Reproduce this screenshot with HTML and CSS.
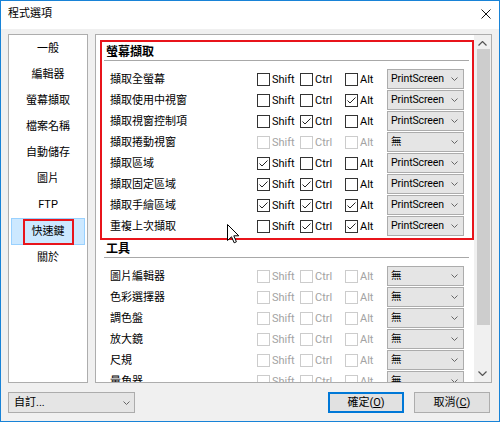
FILE: index.html
```html
<!DOCTYPE html>
<html lang="zh-Hant">
<head>
<meta charset="utf-8">
<title>程式選項</title>
<link rel="stylesheet" href="styles.css">
</head>
<body>
<div class="window">
  <div class="titlebar">
    <span class="title">程式選項</span>
    <svg class="close" width="10" height="10" viewBox="0 0 10 10"><path d="M0.5 0.5 L9.5 9.5 M9.5 0.5 L0.5 9.5" stroke="#111" stroke-width="1" fill="none"/></svg>
  </div>
  <div class="content">
    <div class="main">
      <ul class="nav">
        <li>一般</li>
        <li>編輯器</li>
        <li>螢幕擷取</li>
        <li>檔案名稱</li>
        <li>自動儲存</li>
        <li>圖片</li>
        <li>FTP</li>
        <li class="active">快速鍵</li>
        <li>關於</li>
      </ul>
      <div class="panel">
        <div class="scroll">
          <section class="group">
            <h2>螢幕擷取</h2>
            <div class="row"><span class="label">擷取全螢幕</span>
              <span class="key"><span class="box"></span>Shift</span>
              <span class="key"><span class="box"></span>Ctrl</span>
              <span class="key"><span class="box"></span>Alt</span>
              <span class="dd"><span class="val">PrintScreen</span><svg width="7" height="4" viewBox="0 0 7 4"><path d="M0.5 0.5 L3.5 3.5 L6.5 0.5" fill="none" stroke="#666"/></svg></span>
            </div>
            <div class="row"><span class="label">擷取使用中視窗</span>
              <span class="key"><span class="box"></span>Shift</span>
              <span class="key"><span class="box"></span>Ctrl</span>
              <span class="key"><span class="box"><svg width="11" height="11" viewBox="0 0 11 11"><path d="M1.5 5.5 L4 8 L9.5 2.5" fill="none" stroke="#222"/></svg></span>Alt</span>
              <span class="dd"><span class="val">PrintScreen</span><svg width="7" height="4" viewBox="0 0 7 4"><path d="M0.5 0.5 L3.5 3.5 L6.5 0.5" fill="none" stroke="#666"/></svg></span>
            </div>
            <div class="row"><span class="label">擷取視窗控制項</span>
              <span class="key"><span class="box"></span>Shift</span>
              <span class="key"><span class="box"><svg width="11" height="11" viewBox="0 0 11 11"><path d="M1.5 5.5 L4 8 L9.5 2.5" fill="none" stroke="#222"/></svg></span>Ctrl</span>
              <span class="key"><span class="box"></span>Alt</span>
              <span class="dd"><span class="val">PrintScreen</span><svg width="7" height="4" viewBox="0 0 7 4"><path d="M0.5 0.5 L3.5 3.5 L6.5 0.5" fill="none" stroke="#666"/></svg></span>
            </div>
            <div class="row"><span class="label">擷取捲動視窗</span>
              <span class="key off"><span class="box"></span>Shift</span>
              <span class="key off"><span class="box"></span>Ctrl</span>
              <span class="key off"><span class="box"></span>Alt</span>
              <span class="dd"><span class="val">無</span><svg width="7" height="4" viewBox="0 0 7 4"><path d="M0.5 0.5 L3.5 3.5 L6.5 0.5" fill="none" stroke="#666"/></svg></span>
            </div>
            <div class="row"><span class="label">擷取區域</span>
              <span class="key"><span class="box"><svg width="11" height="11" viewBox="0 0 11 11"><path d="M1.5 5.5 L4 8 L9.5 2.5" fill="none" stroke="#222"/></svg></span>Shift</span>
              <span class="key"><span class="box"></span>Ctrl</span>
              <span class="key"><span class="box"></span>Alt</span>
              <span class="dd"><span class="val">PrintScreen</span><svg width="7" height="4" viewBox="0 0 7 4"><path d="M0.5 0.5 L3.5 3.5 L6.5 0.5" fill="none" stroke="#666"/></svg></span>
            </div>
            <div class="row"><span class="label">擷取固定區域</span>
              <span class="key"><span class="box"><svg width="11" height="11" viewBox="0 0 11 11"><path d="M1.5 5.5 L4 8 L9.5 2.5" fill="none" stroke="#222"/></svg></span>Shift</span>
              <span class="key"><span class="box"><svg width="11" height="11" viewBox="0 0 11 11"><path d="M1.5 5.5 L4 8 L9.5 2.5" fill="none" stroke="#222"/></svg></span>Ctrl</span>
              <span class="key"><span class="box"></span>Alt</span>
              <span class="dd"><span class="val">PrintScreen</span><svg width="7" height="4" viewBox="0 0 7 4"><path d="M0.5 0.5 L3.5 3.5 L6.5 0.5" fill="none" stroke="#666"/></svg></span>
            </div>
            <div class="row"><span class="label">擷取手繪區域</span>
              <span class="key"><span class="box"><svg width="11" height="11" viewBox="0 0 11 11"><path d="M1.5 5.5 L4 8 L9.5 2.5" fill="none" stroke="#222"/></svg></span>Shift</span>
              <span class="key"><span class="box"><svg width="11" height="11" viewBox="0 0 11 11"><path d="M1.5 5.5 L4 8 L9.5 2.5" fill="none" stroke="#222"/></svg></span>Ctrl</span>
              <span class="key"><span class="box"><svg width="11" height="11" viewBox="0 0 11 11"><path d="M1.5 5.5 L4 8 L9.5 2.5" fill="none" stroke="#222"/></svg></span>Alt</span>
              <span class="dd"><span class="val">PrintScreen</span><svg width="7" height="4" viewBox="0 0 7 4"><path d="M0.5 0.5 L3.5 3.5 L6.5 0.5" fill="none" stroke="#666"/></svg></span>
            </div>
            <div class="row"><span class="label">重複上次擷取</span>
              <span class="key"><span class="box"></span>Shift</span>
              <span class="key"><span class="box"><svg width="11" height="11" viewBox="0 0 11 11"><path d="M1.5 5.5 L4 8 L9.5 2.5" fill="none" stroke="#222"/></svg></span>Ctrl</span>
              <span class="key"><span class="box"><svg width="11" height="11" viewBox="0 0 11 11"><path d="M1.5 5.5 L4 8 L9.5 2.5" fill="none" stroke="#222"/></svg></span>Alt</span>
              <span class="dd"><span class="val">PrintScreen</span><svg width="7" height="4" viewBox="0 0 7 4"><path d="M0.5 0.5 L3.5 3.5 L6.5 0.5" fill="none" stroke="#666"/></svg></span>
            </div>
          </section>
          <section class="group tools">
            <h2>工具</h2>
            <div class="row"><span class="label">圖片編輯器</span>
              <span class="key off"><span class="box"></span>Shift</span>
              <span class="key off"><span class="box"></span>Ctrl</span>
              <span class="key off"><span class="box"></span>Alt</span>
              <span class="dd"><span class="val">無</span><svg width="7" height="4" viewBox="0 0 7 4"><path d="M0.5 0.5 L3.5 3.5 L6.5 0.5" fill="none" stroke="#666"/></svg></span>
            </div>
            <div class="row"><span class="label">色彩選擇器</span>
              <span class="key off"><span class="box"></span>Shift</span>
              <span class="key off"><span class="box"></span>Ctrl</span>
              <span class="key off"><span class="box"></span>Alt</span>
              <span class="dd"><span class="val">無</span><svg width="7" height="4" viewBox="0 0 7 4"><path d="M0.5 0.5 L3.5 3.5 L6.5 0.5" fill="none" stroke="#666"/></svg></span>
            </div>
            <div class="row"><span class="label">調色盤</span>
              <span class="key off"><span class="box"></span>Shift</span>
              <span class="key off"><span class="box"></span>Ctrl</span>
              <span class="key off"><span class="box"></span>Alt</span>
              <span class="dd"><span class="val">無</span><svg width="7" height="4" viewBox="0 0 7 4"><path d="M0.5 0.5 L3.5 3.5 L6.5 0.5" fill="none" stroke="#666"/></svg></span>
            </div>
            <div class="row"><span class="label">放大鏡</span>
              <span class="key off"><span class="box"></span>Shift</span>
              <span class="key off"><span class="box"></span>Ctrl</span>
              <span class="key off"><span class="box"></span>Alt</span>
              <span class="dd"><span class="val">無</span><svg width="7" height="4" viewBox="0 0 7 4"><path d="M0.5 0.5 L3.5 3.5 L6.5 0.5" fill="none" stroke="#666"/></svg></span>
            </div>
            <div class="row"><span class="label">尺規</span>
              <span class="key off"><span class="box"></span>Shift</span>
              <span class="key off"><span class="box"></span>Ctrl</span>
              <span class="key off"><span class="box"></span>Alt</span>
              <span class="dd"><span class="val">無</span><svg width="7" height="4" viewBox="0 0 7 4"><path d="M0.5 0.5 L3.5 3.5 L6.5 0.5" fill="none" stroke="#666"/></svg></span>
            </div>
            <div class="row"><span class="label">量角器</span>
              <span class="key off"><span class="box"></span>Shift</span>
              <span class="key off"><span class="box"></span>Ctrl</span>
              <span class="key off"><span class="box"></span>Alt</span>
              <span class="dd"><span class="val">無</span><svg width="7" height="4" viewBox="0 0 7 4"><path d="M0.5 0.5 L3.5 3.5 L6.5 0.5" fill="none" stroke="#666"/></svg></span>
            </div>
          </section>
        </div>
        <div class="scrollbar">
          <div class="arrow up"><svg width="9" height="5" viewBox="0 0 9 5"><path d="M0.5 4.5 L4.5 0.5 L8.5 4.5" fill="none" stroke="#555" stroke-width="1.2"/></svg></div>
          <div class="thumb"></div>
          <div class="arrow down"><svg width="9" height="5" viewBox="0 0 9 5"><path d="M0.5 0.5 L4.5 4.5 L8.5 0.5" fill="none" stroke="#555" stroke-width="1.2"/></svg></div>
        </div>
      </div>
    </div>
    <div class="footer">
      <span class="select"><span>自訂...</span><svg width="7" height="4" viewBox="0 0 7 4"><path d="M0.5 0.5 L3.5 3.5 L6.5 0.5" fill="none" stroke="#666"/></svg></span>
      <span class="btn default">確定(<u>O</u>)</span>
      <span class="btn">取消(<u>C</u>)</span>
    </div>
  </div>
  <div class="mark mark-nav"></div>
  <div class="mark mark-group"></div>
  <svg class="cursor" width="13" height="20" viewBox="0 0 13 20"><path d="M0.5 0.5 L0.5 16.5 L4.5 12.8 L7.2 18.8 L9.4 17.8 L6.8 11.8 L11.8 11.8 Z" fill="#fff" stroke="#000" stroke-width="1" stroke-linejoin="round"/></svg>
</div>
</body>
</html>
```

FILE: styles.css
```css
* { box-sizing: border-box; }
html, body { margin: 0; padding: 0; }
body {
  width: 500px;
  height: 422px;
  background: #fff;
  color: #000;
  font-family: Roboto, "Noto Sans CJK TC", sans-serif;
  font-size: 11px;
  line-height: 16px;
}
.window {
  position: relative;
  width: 500px;
  height: 422px;
  border: 1px solid #1883d7;
  background: #f0f0f0;
  display: flex;
  flex-direction: column;
  overflow: hidden;
}
.titlebar {
  flex: none;
  height: 28px;
  background: #fff;
  display: flex;
  align-items: center;
  justify-content: space-between;
  padding: 0 8px 2px 7px;
}
.title { font-size: 11px; }
.content {
  flex: 1;
  display: flex;
  flex-direction: column;
  padding: 5px 7px 8px 7px;
}
.main {
  display: flex;
  gap: 7px;
  height: 349px;
}
.nav {
  width: 80px;
  flex: none;
  margin: 0;
  padding: 1px 2px 0;
  list-style: none;
  background: #fff;
  border: 1px solid #adadad;
}
.nav li {
  height: 26px;
  display: flex;
  align-items: center;
  justify-content: center;
  border: 1px solid transparent;
}
.nav li.active {
  background: #cce8ff;
  border-color: #99d1ff;
  height: 27px;
}
.panel {
  flex: 1;
  display: flex;
  background: #fff;
  border: 1px solid #adadad;
  overflow: hidden;
}
.scroll {
  flex: 1;
  overflow: hidden;
}
.group { padding: 0 5px 0 8px; }
.group h2 {
  margin: 9px 0 8px;
  padding-left: 2px;
  font-size: 12px;
  font-weight: bold;
  line-height: 16px;
  border-bottom: 1px solid #a8a8a8;
}
.group.tools h2 { margin-top: 4px; }
.row {
  display: grid;
  grid-template-columns: 147px 43px 45px 42px 77px;
  height: 21px;
  align-items: center;
  padding-left: 6px;
}
.label { white-space: nowrap; }
.key {
  display: flex;
  align-items: center;
  gap: 2px;
}
.box {
  width: 13px;
  height: 13px;
  flex: none;
  display: inline-flex;
  border: 1px solid #333;
  background: #fff;
}
.key.off { color: #a3a3a3; }
.key.off .box { border-color: #cccccc; }
.dd {
  align-self: start;
  height: 20px;
  display: flex;
  align-items: center;
  justify-content: space-between;
  padding: 0 5px 0 3px;
  background: #e5e5e5;
  border: 1px solid #acacac;
}
.dd .val { font-size: 10.5px; letter-spacing: -0.1px; }
.scrollbar {
  width: 17px;
  flex: none;
  display: flex;
  flex-direction: column;
  background: #f0f0f0;
}
.arrow {
  display: flex;
  align-items: center;
  justify-content: center;
}
.arrow.up { height: 14px; padding-top: 3px; }
.arrow.down { height: 17px; margin-top: auto; }
.thumb {
  height: 276px;
  margin: 0 1px 0 3px;
  background: #cdcdcd;
}
.footer {
  margin-top: 9px;
  height: 21px;
  display: flex;
  align-items: center;
  gap: 10px;
  padding-right: 2px;
}
.select {
  width: 127px;
  height: 21px;
  display: flex;
  align-items: center;
  justify-content: space-between;
  padding: 0 4px 0 5px;
  background: #e5e5e5;
  border: 1px solid #acacac;
  margin-right: auto;
}
.btn {
  width: 76px;
  height: 21px;
  display: flex;
  align-items: center;
  justify-content: center;
  background: #e1e1e1;
  border: 1px solid #adadad;
}
.btn.default {
  border-color: #0078d7;
  box-shadow: inset 0 0 0 1px #0078d7;
}
.mark {
  position: absolute;
  border: 2px solid #e8141b;
  pointer-events: none;
}
.mark-nav { left: 22px; top: 218px; width: 51px; height: 26px; }
.mark-group { left: 99px; top: 39px; width: 374px; height: 200px; }
.cursor {
  position: absolute;
  left: 226px;
  top: 223px;
}
```
